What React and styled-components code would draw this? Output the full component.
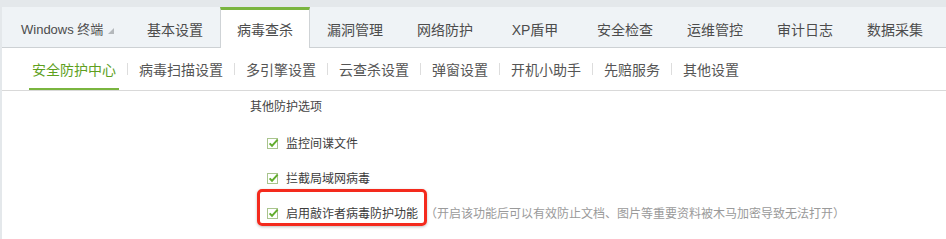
import React from 'react';
import styled, { createGlobalStyle } from 'styled-components';

const GlobalStyle = createGlobalStyle`
  html, body {
    margin: 0;
    padding: 0;
    background: #ffffff;
  }
  body {
    font-family: "Liberation Sans", "Noto Sans CJK SC", sans-serif;
  }
`;

const Page = styled.div`
  width: 946px;
  height: 239px;
  box-sizing: border-box;
  border-top: 7px solid #e4e8eb;
  border-left: 2px solid #e4e8eb;
  background: #ffffff;
  overflow: hidden;
`;

const TabBar = styled.div`
  display: flex;
  height: 40px;
  background: #eff3f6;
  border-bottom: 1px solid #cdd1d4;
`;

const Tab = styled.div`
  box-sizing: border-box;
  display: flex;
  align-items: center;
  justify-content: ${(p) => (p.$first ? 'flex-start' : 'center')};
  width: ${(p) => (p.$first ? '128px' : '90px')};
  height: ${(p) => (p.$active ? '41px' : '40px')};
  padding-left: ${(p) => (p.$first ? '18px' : '0')};
  font-size: ${(p) => (p.$first ? '13px' : '14px')};
  color: #4c4c4c;
  background: ${(p) => (p.$active ? '#ffffff' : 'transparent')};
  border-top: 3px solid ${(p) => (p.$active ? '#7ab53f' : 'transparent')};
  border-left: 1px solid ${(p) => (p.$active ? '#cfd3d6' : 'transparent')};
  border-right: 1px solid ${(p) => (p.$active ? '#cfd3d6' : 'transparent')};
  position: relative;
  z-index: ${(p) => (p.$active ? 1 : 0)};
  white-space: nowrap;
`;

const Caret = styled.span`
  display: inline-block;
  width: 0;
  height: 0;
  margin-left: 5px;
  margin-top: 4px;
  border-left: 6px solid transparent;
  border-bottom: 6px solid #b4b8bb;
`;

const SubNav = styled.div`
  display: flex;
  align-items: center;
  height: 42px;
  padding-left: 27px;
  border-bottom: 1px solid #d9d9d9;
  margin-top: -1px;
  padding-top: 1px;
`;

const SubItem = styled.div`
  box-sizing: border-box;
  height: 42px;
  display: flex;
  align-items: center;
  padding: 2px 3px 0;
  font-size: 14px;
  color: ${(p) => (p.$active ? '#5e9f1e' : '#555555')};
  border-bottom: 2px solid ${(p) => (p.$active ? '#7ab53f' : 'transparent')};
  white-space: nowrap;
`;

const Separator = styled.span`
  width: 1px;
  height: 12px;
  margin: 0 8px;
  background: #dddddd;
`;

const Content = styled.div`
  padding-left: 248px;
`;

const Heading = styled.div`
  height: 32px;
  line-height: 32px;
  font-size: 12px;
  color: #444444;
`;

const OptionList = styled.div`
  display: flex;
  flex-direction: column;
  padding-top: 2px;
  padding-left: 17px;
`;

const Option = styled.div`
  position: relative;
  display: flex;
  align-items: center;
  height: 35px;
  font-size: 12px;
  color: #3c3c3c;
`;

const Label = styled.span`
  margin-left: 7px;
`;

const Hint = styled.span`
  margin-left: 7px;
  color: #9a9a9a;
`;

const Highlight = styled.span`
  position: absolute;
  left: -10px;
  top: -6px;
  width: 170px;
  height: 37px;
  box-sizing: border-box;
  border: 3px solid #f42a1d;
  border-radius: 5px;
  box-shadow: 0 1px 3px rgba(0, 0, 0, 0.25);
  pointer-events: none;
`;

function CheckIcon() {
  return (
    <svg width="12" height="12" viewBox="0 0 12 12">
      <rect x="0.5" y="1.5" width="10" height="10" fill="#ffffff" stroke="#a9c48d" />
      <path d="M2.6 6.4 L5 8.8 L10.6 2.6" fill="none" stroke="#62ad2c" strokeWidth="2" />
    </svg>
  );
}

const tabs = ['基本设置', '病毒查杀', '漏洞管理', '网络防护', 'XP盾甲', '安全检查', '运维管控', '审计日志', '数据采集'];
const subItems = ['安全防护中心', '病毒扫描设置', '多引擎设置', '云查杀设置', '弹窗设置', '开机小助手', '先赔服务', '其他设置'];

export default function App() {
  return (
    <>
      <GlobalStyle />
      <Page>
        <TabBar>
          <Tab $first>
            Windows 终端
            <Caret />
          </Tab>
          {tabs.map((t) => (
            <Tab key={t} $active={t === '病毒查杀'}>
              {t}
            </Tab>
          ))}
        </TabBar>

        <SubNav>
          {subItems.map((s, i) => (
            <React.Fragment key={s}>
              {i > 0 && <Separator />}
              <SubItem $active={i === 0}>{s}</SubItem>
            </React.Fragment>
          ))}
        </SubNav>

        <Content>
          <Heading>其他防护选项</Heading>
          <OptionList>
            <Option>
              <CheckIcon />
              <Label>监控间谍文件</Label>
            </Option>
            <Option>
              <CheckIcon />
              <Label>拦截局域网病毒</Label>
            </Option>
            <Option>
              <CheckIcon />
              <Label>启用敲诈者病毒防护功能</Label>
              <Hint>（开启该功能后可以有效防止文档、图片等重要资料被木马加密导致无法打开）</Hint>
              <Highlight />
            </Option>
          </OptionList>
        </Content>
      </Page>
    </>
  );
}
